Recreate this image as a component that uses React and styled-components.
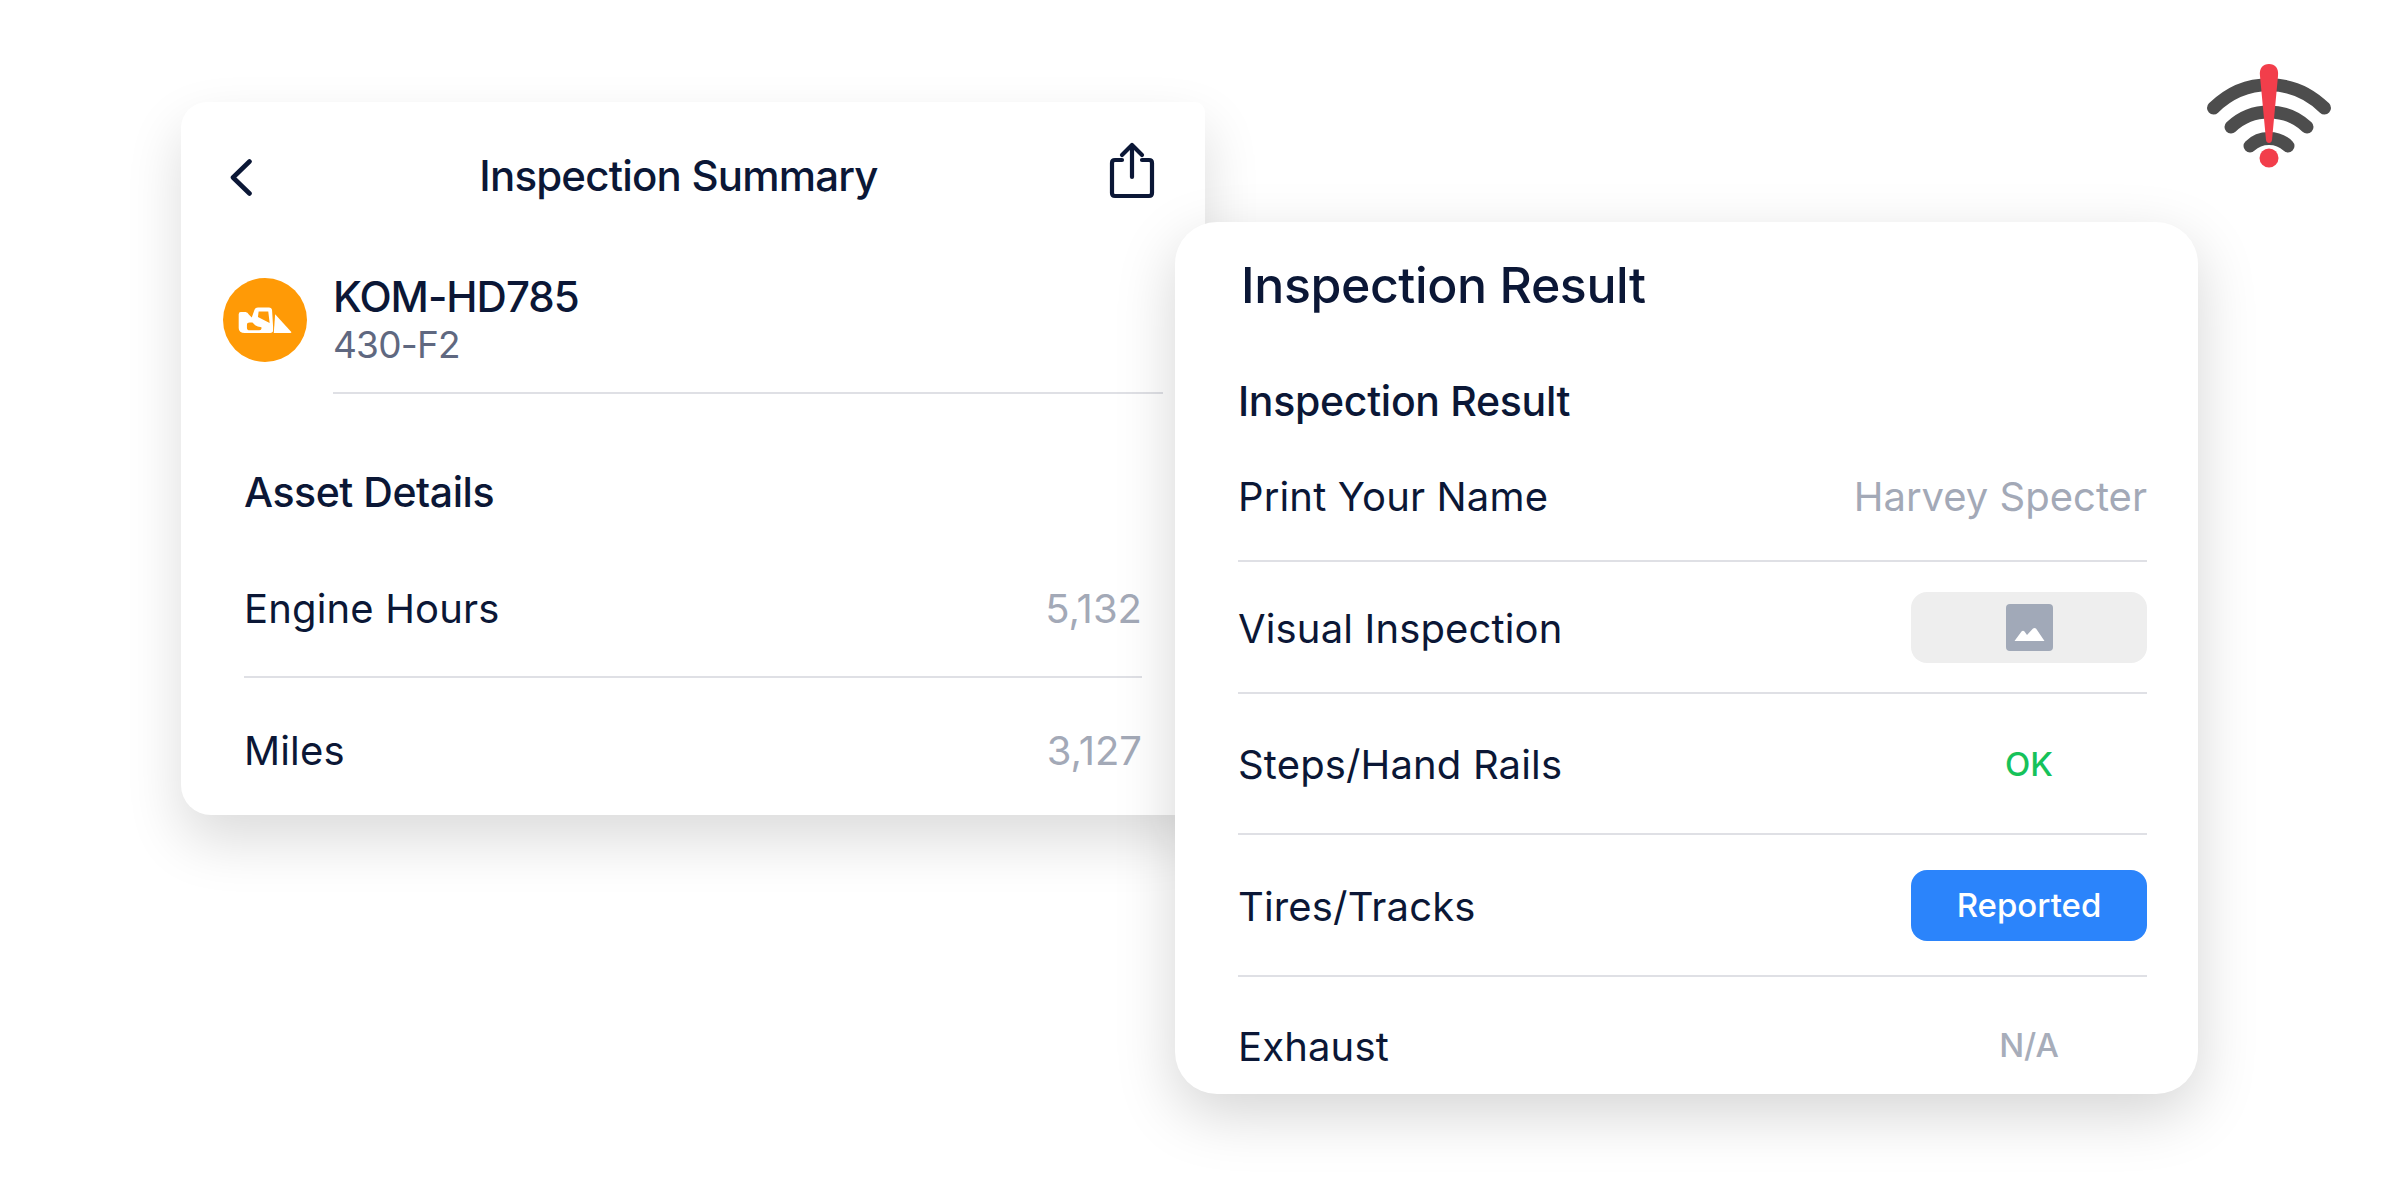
import React from 'react';
import styled, { createGlobalStyle } from 'styled-components';

const INK = '#0b1736';
const MUTED = '#a3a9b7';
const LINE = '#dfe0e5';

const GlobalStyle = createGlobalStyle`
    html, body {
        margin: 0;
        padding: 0;
        background: #fff;
    }
    body {
        font-family: "Inter", "Liberation Sans", sans-serif;
        color: ${INK};
    }
`;

const WifiAlert = () => (
    <WifiIcon viewBox="0 0 130 110" aria-hidden="true">
        <g fill="none" stroke="#4d4d4d" strokeWidth="13" strokeLinecap="round">
            <path d="M9.5 46 C41 15 89 15 120.5 46" />
            <path d="M27 65 C48 45 82 45 103 65" />
            <path d="M46 84 C56 74 74 74 84 84" />
        </g>
        <path
            d="M56 14 C55 6 59 2 65 2 C71 2 75 6 74 14 L68 78 C67.7 82 62.3 82 62 78 Z"
            fill="#f23e4b"
        />
        <circle cx="65" cy="96" r="9.5" fill="#f23e4b" />
    </WifiIcon>
);

const Dozer = () => (
    <DozerIcon viewBox="10 28 157 77" aria-hidden="true">
        <path
            fillRule="evenodd"
            fill="#fff"
            d="M12 48 Q12 42 18 42 H32 Q38 42 42 50 L50 58 L58 35 Q60 29 68 29 H100 Q108 29 109 37 L112 85 V98 Q110 103 104 103 H30 Q12 103 12 88 Z
               M70 40 H98 L102 74 L68 56 Z
               M36 78 Q36 72 44 72 H52 L60 80 Q66 84 78 86 Q80 95 72 95 H44 Q36 95 36 88 Z"
        />
        <path fill="#fff" d="M118 48 L165 100 Q166 103 162 103 H114 Z" />
    </DozerIcon>
);

const ShareOutline = () => (
    <ShareIcon viewBox="0 0 50 60" aria-hidden="true">
        <g fill="none" stroke={INK} strokeWidth="4.2" strokeLinecap="round" strokeLinejoin="round">
            <path d="M15 19 H8 Q5 19 5 22 V52 Q5 55 8 55 H42 Q45 55 45 52 V22 Q45 19 42 19 H35" />
            <path d="M25 36 V5" />
            <path d="M15 14 L25 4 L35 14" />
        </g>
    </ShareIcon>
);

const Chevron = () => (
    <BackIcon viewBox="0 0 25 37" aria-hidden="true">
        <path
            d="M20.5 2.5 L4 18.5 L20.5 34.5"
            fill="none"
            stroke={INK}
            strokeWidth="4.6"
            strokeLinecap="round"
            strokeLinejoin="round"
        />
    </BackIcon>
);

const ImageThumb = () => (
    <ThumbIcon viewBox="0 0 47 47" aria-hidden="true">
        <rect width="47" height="47" rx="4" fill="#a1a9b8" />
        <path
            d="M8.5 37 L15.5 27.5 Q17 26 18.5 27.5 L21 31 L27 24.5 Q28.5 23.5 30 24.5 L38.5 37 Z"
            fill="#fff"
        />
    </ThumbIcon>
);

const assetRows = [
    { label: 'Engine Hours', value: '5,132', height: 140 },
    { label: 'Miles', value: '3,127', height: 142 },
];

const App = () => {
    return (
        <Page>
            <GlobalStyle />
            <WifiAlert />
            <SummaryCard>
                <SummaryTop>
                    <Chevron />
                    <SummaryTitle>Inspection Summary</SummaryTitle>
                    <ShareOutline />
                </SummaryTop>
                <AssetHead>
                    <Avatar>
                        <Dozer />
                    </Avatar>
                    <AssetInfo>
                        <AssetName>KOM-HD785</AssetName>
                        <AssetCode>430-F2</AssetCode>
                    </AssetInfo>
                </AssetHead>
                <DetailsTitle>Asset Details</DetailsTitle>
                {assetRows.map((row, i) => (
                    <AssetRow key={row.label} $height={row.height} $last={i === assetRows.length - 1}>
                        <RowLabel>{row.label}</RowLabel>
                        <RowValue>{row.value}</RowValue>
                    </AssetRow>
                ))}
            </SummaryCard>
            <ResultCard>
                <ResultTitle>Inspection Result</ResultTitle>
                <ResultSubtitle>Inspection Result</ResultSubtitle>
                <ResultRow $height={131}>
                    <RowLabel>Print Your Name</RowLabel>
                    <RowValue>Harvey Specter</RowValue>
                </ResultRow>
                <ResultRow $height={132}>
                    <RowLabel>Visual Inspection</RowLabel>
                    <Pill $bg="#eeeeee">
                        <ImageThumb />
                    </Pill>
                </ResultRow>
                <ResultRow $height={141}>
                    <RowLabel>Steps/Hand Rails</RowLabel>
                    <Pill $color="#16c25a">OK</Pill>
                </ResultRow>
                <ResultRow $height={142}>
                    <RowLabel>Tires/Tracks</RowLabel>
                    <Pill $bg="#2b84fb" $color="#fff">Reported</Pill>
                </ResultRow>
                <ResultRow $height={136} $last>
                    <RowLabel>Exhaust</RowLabel>
                    <Pill $color="#a7adba">N/A</Pill>
                </ResultRow>
            </ResultCard>
        </Page>
    );
};

export default App;

const Page = styled.div`
    position: relative;
    display: flex;
    align-items: flex-start;
    width: 2400px;
    height: 1200px;
    overflow: hidden;
    padding-left: 181px;
    box-sizing: border-box;
    background: #fff;
`;

const WifiIcon = styled.svg`
    position: absolute;
    left: 2204px;
    top: 62px;
    width: 130px;
    height: 110px;
`;

const SummaryCard = styled.section`
    flex: none;
    width: 1024px;
    height: 713px;
    margin-top: 102px;
    padding-top: 41px;
    box-sizing: border-box;
    background: #fff;
    border-radius: 26px 10px 30px 30px;
    box-shadow: 0 26px 56px rgba(0, 0, 0, 0.14);
`;

const SummaryTop = styled.header`
    display: flex;
    align-items: center;
    justify-content: space-between;
    height: 56px;
    padding: 0 48px;
`;

const BackIcon = styled.svg`
    width: 25px;
    height: 37px;
    margin-top: 12px;
`;

const ShareIcon = styled.svg`
    width: 50px;
    height: 60px;
`;

const SummaryTitle = styled.h1`
    margin: 10px 0 0 -4px;
    font-size: 42px;
    line-height: 56px;
    font-weight: 500;
    letter-spacing: -0.8px;
`;

const AssetHead = styled.div`
    display: flex;
    align-items: flex-start;
    gap: 26px;
    margin: 79px 42px 0 42px;
`;

const Avatar = styled.div`
    flex: none;
    display: flex;
    align-items: center;
    justify-content: center;
    width: 84px;
    height: 84px;
    border-radius: 50%;
    background: #ff9a06;
`;

const DozerIcon = styled.svg`
    width: 54px;
    height: 27px;
`;

const AssetInfo = styled.div`
    flex: 1;
    display: flex;
    flex-direction: column;
    padding-bottom: 24px;
    border-bottom: 2px solid ${LINE};
`;

const AssetName = styled.div`
    font-size: 42px;
    line-height: 50px;
    font-weight: 500;
    letter-spacing: -1px;
    margin-top: -6px;
`;

const AssetCode = styled.div`
    font-size: 37px;
    line-height: 46px;
    letter-spacing: -0.8px;
    color: #5f6880;
`;

const DetailsTitle = styled.h2`
    margin: 72px 0 20px 63px;
    font-size: 41px;
    line-height: 52px;
    font-weight: 500;
    letter-spacing: -0.45px;
`;

const AssetRow = styled.div`
    display: flex;
    align-items: center;
    justify-content: space-between;
    height: ${(p) => p.$height}px;
    margin: 0 63px;
    border-bottom: ${(p) => (p.$last ? 'none' : `2px solid ${LINE}`)};
    box-sizing: border-box;
`;

const RowLabel = styled.span`
    padding-top: 3px;
    font-size: 40px;
    line-height: 50px;
    letter-spacing: 0.15px;
`;

const RowValue = styled.span`
    padding-top: 3px;
    font-size: 40px;
    line-height: 50px;
    color: ${MUTED};
`;

const ResultCard = styled.section`
    position: relative;
    flex: none;
    width: 1023px;
    height: 872px;
    margin: 222px 0 0 -30px;
    padding: 30px 51px 0 63px;
    box-sizing: border-box;
    background: #fff;
    border-radius: 42px;
    box-shadow: 0 20px 60px rgba(0, 0, 0, 0.17);
`;

const ResultTitle = styled.h1`
    margin: 0 0 0 3px;
    font-size: 50px;
    line-height: 66px;
    font-weight: 500;
    letter-spacing: -0.4px;
`;

const ResultSubtitle = styled.h2`
    margin: 58px 0 5px;
    font-size: 41px;
    line-height: 50px;
    font-weight: 500;
    letter-spacing: -0.3px;
`;

const ResultRow = styled.div`
    display: flex;
    align-items: center;
    justify-content: space-between;
    height: ${(p) => p.$height}px;
    border-bottom: ${(p) => (p.$last ? 'none' : `2px solid ${LINE}`)};
    box-sizing: border-box;
`;

const Pill = styled.div`
    display: flex;
    align-items: center;
    justify-content: center;
    width: 236px;
    height: 71px;
    border-radius: 16px;
    background: ${(p) => p.$bg || 'transparent'};
    color: ${(p) => p.$color || INK};
    font-size: 33px;
    font-weight: 500;
`;

const ThumbIcon = styled.svg`
    width: 47px;
    height: 47px;
`;
